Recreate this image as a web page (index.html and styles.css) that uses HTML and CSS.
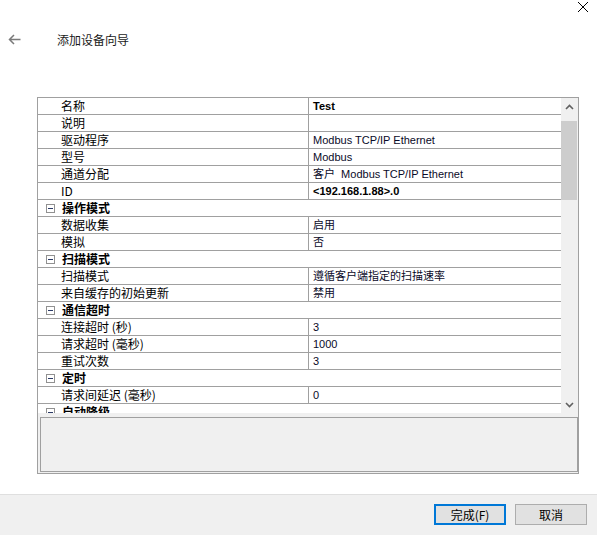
FILE: index.html
```html
<!DOCTYPE html>
<html lang="zh-CN">
<head>
  <meta charset="UTF-8" />
  <title>添加设备向导</title>
  <link rel="stylesheet" href="styles.css">
</head>
<body>
  <div class="window">
    <div class="titlebar">
      <svg class="close" width="12" height="12" viewBox="0 0 12 12">
        <path d="M1 1 L11 11 M11 1 L1 11" stroke="#000" stroke-width="1" fill="none"/>
      </svg>
    </div>

    <div class="nav">
      <svg class="back" width="13" height="11" viewBox="0 0 13 11">
        <path d="M12.5 5.5 H1.5 M6 1 L1.5 5.5 L6 10" stroke="#7a7a7a" stroke-width="1.5" fill="none"/>
      </svg>
      <span class="nav-title">添加设备向导</span>
    </div>

    <div class="grid">
      <div class="grid-view">
        <div class="rows">
          <div class="row"><span class="label">名称</span><span class="value bold">Test</span></div>
          <div class="row"><span class="label">说明</span><span class="value"></span></div>
          <div class="row"><span class="label">驱动程序</span><span class="value">Modbus TCP/IP Ethernet</span></div>
          <div class="row"><span class="label">型号</span><span class="value">Modbus</span></div>
          <div class="row"><span class="label">通道分配</span><span class="value">客户&nbsp; Modbus TCP/IP Ethernet</span></div>
          <div class="row"><span class="label">ID</span><span class="value bold">&lt;192.168.1.88&gt;.0</span></div>

          <div class="row category"><span class="toggle"></span><span class="cat-name">操作模式</span></div>
          <div class="row"><span class="label">数据收集</span><span class="value">启用</span></div>
          <div class="row"><span class="label">模拟</span><span class="value">否</span></div>

          <div class="row category"><span class="toggle"></span><span class="cat-name">扫描模式</span></div>
          <div class="row"><span class="label">扫描模式</span><span class="value">遵循客户端指定的扫描速率</span></div>
          <div class="row"><span class="label">来自缓存的初始更新</span><span class="value">禁用</span></div>

          <div class="row category"><span class="toggle"></span><span class="cat-name">通信超时</span></div>
          <div class="row"><span class="label">连接超时 (秒)</span><span class="value">3</span></div>
          <div class="row"><span class="label">请求超时 (毫秒)</span><span class="value">1000</span></div>
          <div class="row"><span class="label">重试次数</span><span class="value">3</span></div>

          <div class="row category"><span class="toggle"></span><span class="cat-name">定时</span></div>
          <div class="row"><span class="label">请求间延迟 (毫秒)</span><span class="value">0</span></div>

          <div class="row category"><span class="toggle"></span><span class="cat-name">自动降级</span></div>
        </div>
        <div class="scrollbar">
          <div class="scroll-btn">
            <svg width="9" height="6" viewBox="0 0 9 6"><path d="M1 5 L4.5 1.5 L8 5" stroke="#606060" stroke-width="1.6" fill="none"/></svg>
          </div>
          <div class="scroll-track">
            <div class="scroll-thumb"></div>
          </div>
          <div class="scroll-btn">
            <svg width="9" height="6" viewBox="0 0 9 6"><path d="M1 1 L4.5 4.5 L8 1" stroke="#606060" stroke-width="1.6" fill="none"/></svg>
          </div>
        </div>
      </div>
      <div class="description"></div>
    </div>

    <div class="footer">
      <button class="btn btn-primary">完成(F)</button>
      <button class="btn">取消</button>
    </div>
  </div>
</body>
</html>
```

FILE: styles.css
```css
body {
  margin: 0;
  background: #fff;
  color: #000;
  font-family: "Liberation Sans", "Noto Sans CJK SC", sans-serif;
  font-size: 12px;
}
.window {
  width: 597px;
  height: 536px;
  display: flex;
  flex-direction: column;
}
.titlebar {
  height: 16px;
  display: flex;
  justify-content: flex-end;
  align-items: flex-start;
  padding: 1px 8px 0 0;
  box-sizing: border-box;
}
.nav {
  display: flex;
  align-items: center;
  height: 20px;
  margin-top: 13px;
  padding-left: 8px;
}
.nav-title {
  margin-left: 36px;
  font-family: "Noto Sans CJK SC", sans-serif;
  font-size: 12px;
  color: #1a1a1a;
}
.grid {
  margin: 48px 0 0 37px;
  width: 542px;
  height: 377px;
  border: 1px solid #a0a0a0;
  box-sizing: border-box;
  background: #f0f0f0;
  display: flex;
  flex-direction: column;
}
.grid-view {
  display: flex;
  height: 315px;
}
.rows {
  flex: 1;
  background: #fff;
  overflow: hidden;
}
.row {
  display: flex;
  height: 17px;
  border-bottom: 1px solid #a0a0a0;
  box-sizing: border-box;
  line-height: 16px;
  white-space: nowrap;
}
.label {
  width: 270px;
  padding-left: 23px;
  box-sizing: border-box;
  font-family: "Noto Sans CJK SC", sans-serif;
  font-size: 12px;
}
.value {
  flex: 1;
  border-left: 1px solid #a0a0a0;
  padding-left: 4px;
  font-family: "Liberation Sans", "Noto Sans CJK SC", sans-serif;
  font-size: 11px;
  color: #0a0a28;
}
.value.bold {
  font-weight: bold;
  color: #000;
}
.category {
  align-items: center;
}
.toggle {
  position: relative;
  width: 9px;
  height: 9px;
  margin-left: 8px;
  border: 1px solid #919191;
  box-sizing: border-box;
  background: #fff;
}
.toggle::after {
  content: "";
  position: absolute;
  left: 1px;
  top: 3px;
  width: 5px;
  height: 1px;
  background: #2b3a66;
}
.cat-name {
  margin-left: 7px;
  font-family: "Noto Sans CJK SC", sans-serif;
  font-weight: bold;
  font-size: 12px;
}
.scrollbar {
  width: 17px;
  background: #f0f0f0;
  display: flex;
  flex-direction: column;
}
.scroll-btn {
  height: 17px;
  display: flex;
  align-items: center;
  justify-content: center;
}
.scroll-track {
  flex: 1;
  padding: 6px 1px 0 0;
}
.scroll-thumb {
  height: 79px;
  background: #cdcdcd;
}
.description {
  height: 55px;
  margin: 4px 0 1px 2px;
  border: 1px solid #a0a0a0;
  box-sizing: border-box;
  background: #f0f0f0;
}
.footer {
  margin-top: 20px;
  height: 41px;
  background: #f0f0f0;
  border-top: 1px solid #dfdfdf;
  box-sizing: border-box;
  display: flex;
  justify-content: flex-end;
  align-items: flex-start;
  gap: 9px;
  padding: 9px 10px 0 0;
}
.btn {
  width: 72px;
  height: 21px;
  padding: 0;
  background: #e1e1e1;
  border: 1px solid #adadad;
  font-family: "Noto Sans CJK SC", sans-serif;
  font-size: 12px;
  color: #000;
}
.btn-primary {
  border: 2px solid #0078d7;
}
```
